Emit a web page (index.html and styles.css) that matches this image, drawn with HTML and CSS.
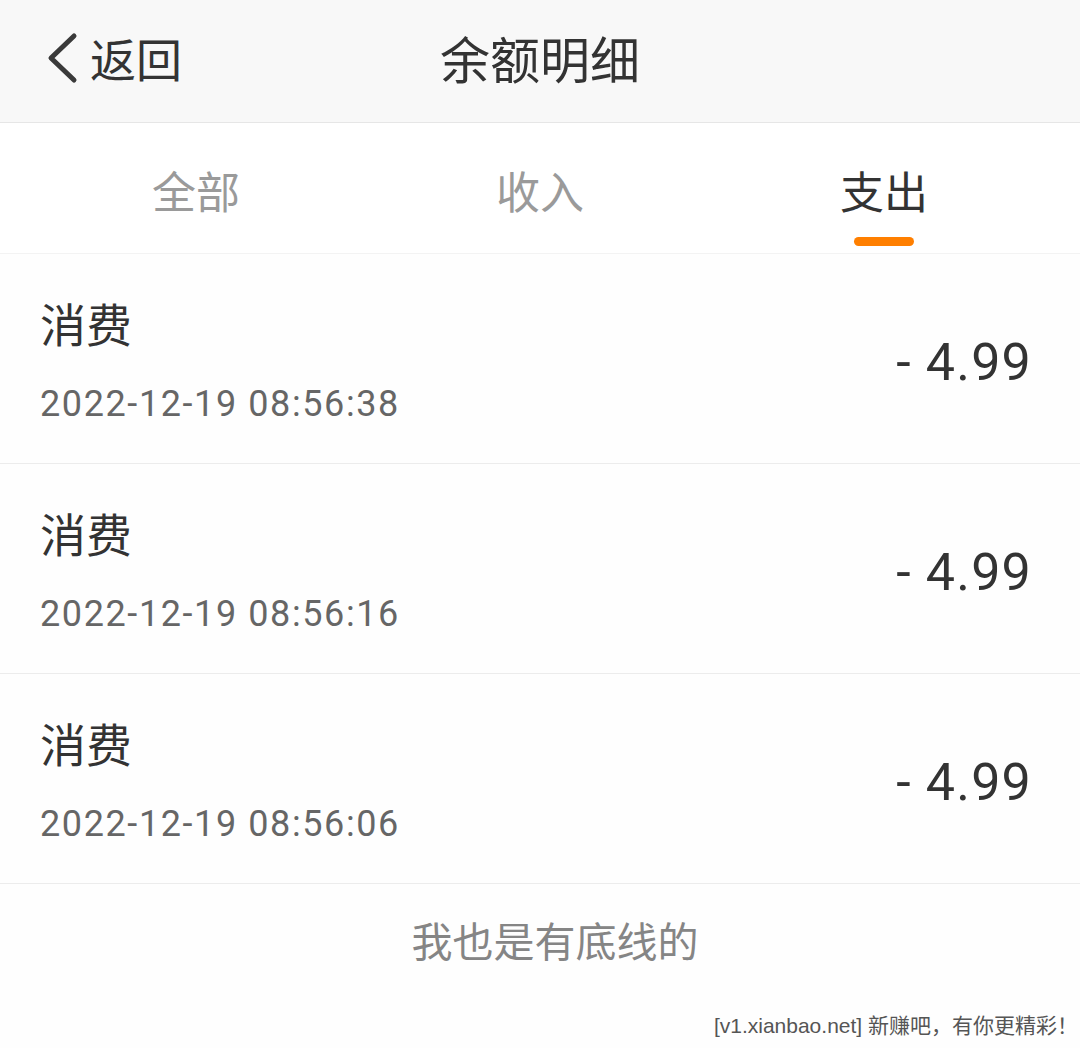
FILE: index.html
```html
<!DOCTYPE html>
<html lang="zh-CN">
<head>
<meta charset="utf-8">
<title>余额明细</title>
<link rel="stylesheet" href="styles.css">
</head>
<body>
<div class="page">
  <header class="topbar">
    <div class="back">
      <svg class="chev" width="36" height="52" viewBox="0 0 36 52"><polyline points="30,4 7,26 30,48" fill="none" stroke="#3a3a3a" stroke-width="5" stroke-linecap="round" stroke-linejoin="round"/></svg>
      <span class="back-text">返回</span>
    </div>
    <h1 class="title">余额明细</h1>
  </header>
  <nav class="tabs">
    <div class="tab">全部</div>
    <div class="tab">收入</div>
    <div class="tab active">支出<span class="bar"></span></div>
  </nav>
  <ul class="list">
    <li class="row">
      <div class="info">
        <div class="name">消费</div>
        <div class="time">2022-12-19 08:56:38</div>
      </div>
      <div class="amount">- 4.99</div>
    </li>
    <li class="row">
      <div class="info">
        <div class="name">消费</div>
        <div class="time">2022-12-19 08:56:16</div>
      </div>
      <div class="amount">- 4.99</div>
    </li>
    <li class="row">
      <div class="info">
        <div class="name">消费</div>
        <div class="time">2022-12-19 08:56:06</div>
      </div>
      <div class="amount">- 4.99</div>
    </li>
  </ul>
  <div class="end">我也是有底线的</div>
  <div class="mark">[v1.xianbao.net] 新赚吧，有你更精彩！</div>
</div>
</body>
</html>
```
FILE: styles.css
```css
* { box-sizing: border-box; }
html, body { margin: 0; padding: 0; background: #fefefe; }
body {
  font-family: Roboto, "Noto Sans CJK SC", sans-serif;
  color: #333;
}
.page { width: 1080px; height: 1048px; display: flex; flex-direction: column; }
.topbar {
  height: 123px;
  background: #f8f8f8;
  border-bottom: 1px solid #e6e6e6;
  display: flex;
  align-items: center;
  justify-content: center;
  position: relative;
}
.back {
  position: absolute;
  left: 44px;
  top: 0;
  height: 114px;
  display: flex;
  align-items: center;
  gap: 10px;
}
.chev { display: block; margin-top: 2px; }
.back-text { font-family: "Noto Sans CJK SC", sans-serif; font-size: 46px; color: #333; line-height: 1; }
.title {
  margin: -8px 0 0 0;
  font-family: "Noto Sans CJK SC", sans-serif;
  font-weight: 400;
  font-size: 50px;
  color: #333;
  line-height: 1;
}
.tabs {
  height: 131px;
  padding: 0 24px;
  display: grid;
  grid-template-columns: repeat(3, 1fr);
  background: #fff;
  border-bottom: 1px solid #f3f3f3;
}
.tab {
  position: relative;
  text-align: center;
  font-family: "Noto Sans CJK SC", sans-serif;
  font-size: 44px;
  line-height: 60px;
  padding-top: 37px;
  color: #9a9a9a;
}
.tab.active { color: #333; }
.bar {
  position: absolute;
  left: 50%;
  top: 114px;
  width: 60px;
  height: 9px;
  margin-left: -30px;
  border-radius: 5px;
  background: #ff7f00;
}
.list { list-style: none; margin: 0; padding: 0; background: #fefefe; }
.row {
  height: 210px;
  border-bottom: 1px solid #ececec;
  display: flex;
  align-items: center;
  justify-content: space-between;
  padding: 0 50px 0 40px;
}
.info { display: flex; flex-direction: column; padding-top: 10px; }
.name {
  font-family: "Noto Sans CJK SC", sans-serif;
  font-size: 46px;
  line-height: 60px;
  color: #333;
  margin-top: -6px;
}
.time {
  margin-top: 27px;
  font-size: 36px;
  line-height: 50px;
  color: #666;
  letter-spacing: 1.6px;
}
.amount {
  font-size: 52px;
  line-height: 60px;
  color: #333;
  padding-top: 8px;
  letter-spacing: 1.2px;
  margin-right: -2px;
}
.end {
  text-align: center;
  font-family: "Noto Sans CJK SC", sans-serif;
  font-size: 41px;
  color: #858585;
  line-height: 60px;
  padding-top: 25px;
  padding-left: 30px;
}
.mark {
  margin-top: auto;
  text-align: right;
  padding: 0 2px 10px 0;
  font-family: "Liberation Sans", "Noto Sans CJK SC", sans-serif;
  font-size: 21px;
  line-height: 24px;
  color: #555;
}
```
